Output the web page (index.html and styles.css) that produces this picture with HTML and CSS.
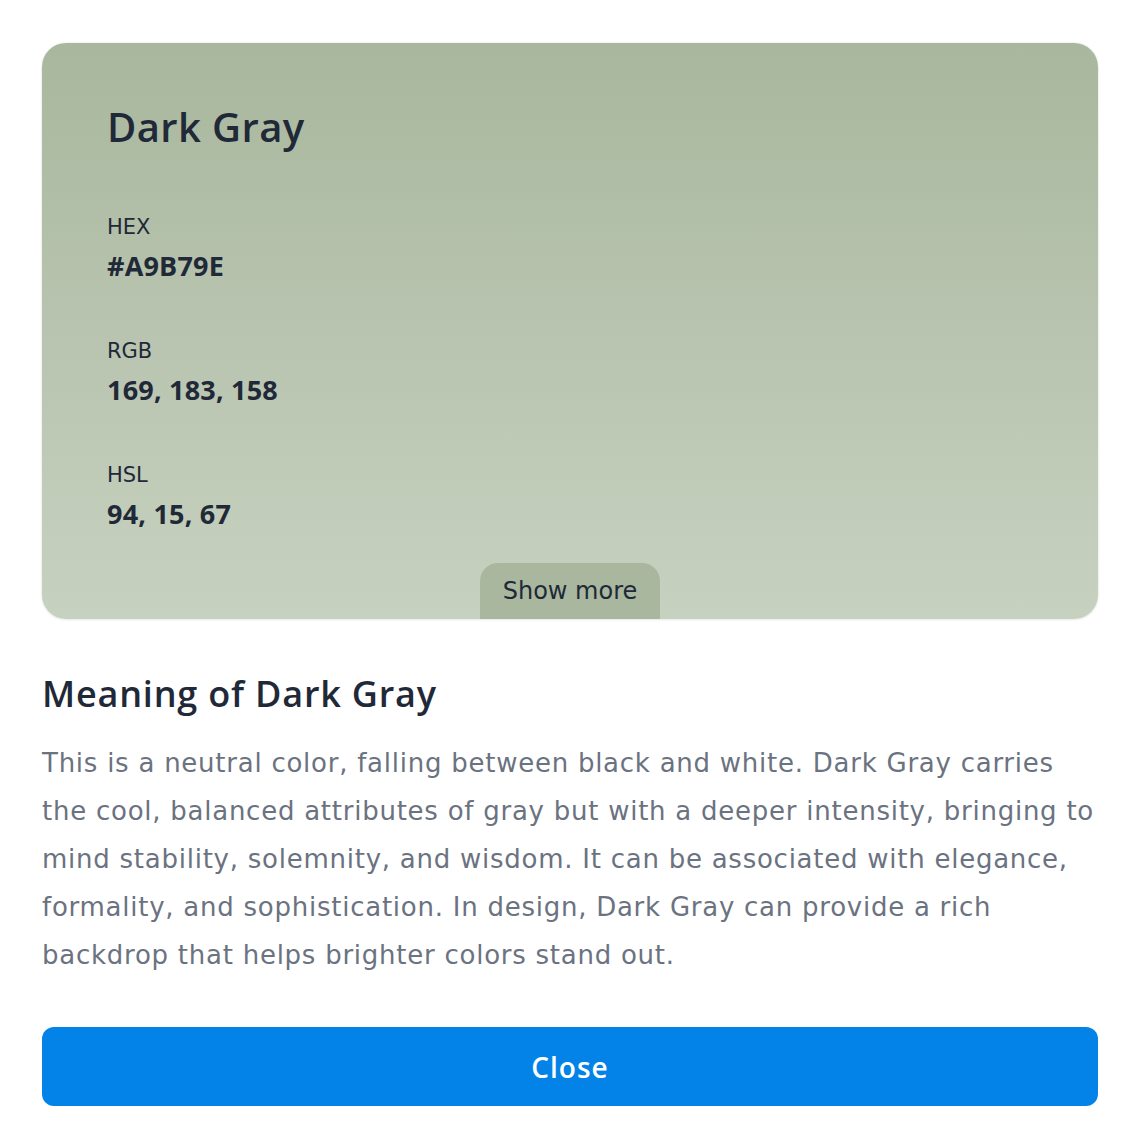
FILE: index.html
```html
<!DOCTYPE html>
<html lang="en">
<head>
<meta charset="utf-8">
<title>Dark Gray</title>
<link rel="stylesheet" href="styles.css">
</head>
<body>
<div class="modal">
  <section class="swatch">
    <h1 class="swatch-title">Dark Gray</h1>
    <div class="values">
      <div class="value-group">
        <div class="value-label">HEX</div>
        <div class="value-text">#A9B79E</div>
      </div>
      <div class="value-group">
        <div class="value-label">RGB</div>
        <div class="value-text">169, 183, 158</div>
      </div>
      <div class="value-group">
        <div class="value-label">HSL</div>
        <div class="value-text">94, 15, 67</div>
      </div>
    </div>
    <button class="show-more" type="button">Show more</button>
  </section>
  <h2 class="meaning-title">Meaning of Dark Gray</h2>
  <p class="meaning-text">This is a neutral color, falling between black and white. Dark Gray carries<br>the cool, balanced attributes of gray but with a deeper intensity, bringing to<br>mind stability, solemnity, and wisdom. It can be associated with elegance,<br>formality, and sophistication. In design, Dark Gray can provide a rich<br>backdrop that helps brighter colors stand out.</p>
  <button class="close-btn" type="button">Close</button>
</div>
</body>
</html>
```
FILE: styles.css
```css
* { box-sizing: border-box; }
html, body { margin: 0; padding: 0; background: #ffffff; }
body {
  font-family: "DejaVu Sans", "Open Sans", sans-serif;
  color: #1f2937;
}
.modal {
  width: 1142px;
  padding: 43px 44px 42px 42px;
  display: flex;
  flex-direction: column;
}
.swatch {
  height: 576px;
  border-radius: 24px;
  background: linear-gradient(to bottom, #a9b79e 0%, #c7d1c0 100%);
  box-shadow: 0 0 2px rgba(0, 0, 0, 0.12), 0 1px 3px rgba(0, 0, 0, 0.06);
  padding: 56px 65px 0 65px;
  display: flex;
  flex-direction: column;
}
.swatch-title {
  margin: 0 0 57px 0;
  font-family: "Open Sans", sans-serif;
  font-size: 40px;
  line-height: 56px;
  font-weight: 600;
  letter-spacing: 0.4px;
  color: #1f2937;
}
.values {
  display: flex;
  flex-direction: column;
  gap: 52px;
}
.value-group {
  display: flex;
  flex-direction: column;
  gap: 6px;
}
.value-label {
  font-size: 21px;
  line-height: 30px;
  font-weight: 400;
  color: #1f2937;
}
.value-text {
  font-family: "Open Sans", sans-serif;
  font-size: 27px;
  line-height: 36px;
  font-weight: 700;
  letter-spacing: 0.2px;
  color: #1f2937;
}
.show-more {
  align-self: center;
  margin-top: auto;
  width: 180px;
  height: 56px;
  border: 0;
  border-radius: 18px 18px 0 0;
  background: #a9b79e;
  font-family: inherit;
  font-size: 24px;
  line-height: 56px;
  color: #1f2937;
  padding: 0 0 2px 0;
}
.meaning-title {
  margin: 55px 0 0 0;
  font-family: "Open Sans", sans-serif;
  font-size: 36px;
  line-height: 40px;
  font-weight: 600;
  letter-spacing: 0.8px;
  color: #1f2937;
}
.meaning-text {
  margin: 25px 0 0 0;
  font-size: 26px;
  line-height: 48px;
  letter-spacing: 0.75px;
  color: #6b7280;
  white-space: nowrap;
}
.close-btn {
  margin-top: 48px;
  height: 79px;
  border: 0;
  border-radius: 12px;
  background: #0383e8;
  color: #ffffff;
  font-family: "Open Sans", sans-serif;
  font-size: 28px;
  font-weight: 600;
  letter-spacing: 1px;
}
```
